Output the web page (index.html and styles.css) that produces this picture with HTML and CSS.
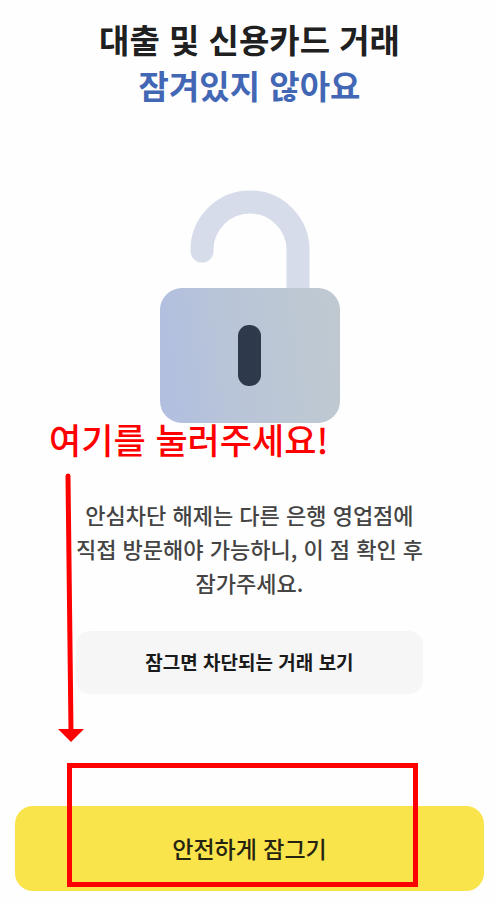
FILE: index.html
```html
<!DOCTYPE html>
<html lang="ko">
<head>
    <meta charset="UTF-8">
    <meta name="viewport" content="width=device-width, initial-scale=1.0">
    <title>대출 및 신용카드 거래</title>
    <link rel="stylesheet" href="styles.css">
</head>
<body>
    <main class="container">
        <h1 class="title">대출 및 신용카드 거래<br><span class="status">잠겨있지 않아요</span></h1>

        <svg class="lock" viewBox="0 0 180 234" aria-hidden="true">
            <defs>
                <linearGradient id="lock-body" x1="0" y1="0.1" x2="1" y2="0">
                    <stop offset="0" stop-color="#b2bfdf"/>
                    <stop offset="0.3" stop-color="#b8c4d8"/>
                    <stop offset="0.6" stop-color="#bbc7d5"/>
                    <stop offset="1" stop-color="#c0c9d0"/>
                </linearGradient>
            </defs>
            <path d="M42 61 V60 A48 48 0 0 1 138 60 V100" fill="none" stroke="#d6dce9" stroke-width="23" stroke-linecap="round"/>
            <rect x="0" y="98" width="180" height="135" rx="22" fill="url(#lock-body)"/>
            <rect x="78" y="135" width="23" height="61" rx="11" fill="#2e394c"/>
        </svg>

        <div class="guide">
            <p class="guide-text">여기를 눌러주세요!</p>
            <svg class="guide-arrow" viewBox="0 0 26 270" aria-hidden="true">
                <path d="M10 3 L13 258" stroke="#fe0000" stroke-width="5" stroke-linecap="round"/>
                <path d="M0 256 H26 L13 269 Z" fill="#fe0000"/>
            </svg>
        </div>

        <p class="description">안심차단 해제는 다른 은행 영업점에<br>직접 방문해야 가능하니, 이 점 확인 후<br>잠가주세요.</p>
        <button type="button" class="detail-button">잠그면 차단되는 거래 보기</button>

        <div class="bottom">
            <button type="button" class="lock-button">안전하게 잠그기</button>
            <div class="highlight"></div>
        </div>
    </main>
</body>
</html>
```
FILE: styles.css
```css
* {
    box-sizing: border-box;
}
body {
    margin: 0;
    background-color: #fefefe;
    font-family: "Noto Sans CJK KR", "Noto Sans", sans-serif;
    color: #202020;
}
.container {
    display: flex;
    flex-direction: column;
    align-items: center;
    padding: 16px 12px 10px 15px;
    text-align: center;
}
.title {
    margin: 0;
    font-size: 33px;
    line-height: 46px;
    font-weight: 700;
}
.status {
    color: #4267b5;
}
.lock {
    display: block;
    width: 180px;
    margin-top: 82px;
}
/* hand-drawn hint lying over the screen */
.guide {
    position: relative;
    align-self: stretch;
    height: 0;
}
.guide-text {
    position: absolute;
    top: -10px;
    left: 34px;
    margin: 0;
    font-size: 35px;
    line-height: 50px;
    font-weight: 500;
    color: #fe0000;
    white-space: nowrap;
}
.guide-arrow {
    position: absolute;
    top: 49px;
    left: 43px;
    width: 26px;
}
.description {
    margin: 73px 0 0;
    font-size: 22px;
    line-height: 34px;
    font-weight: 500;
    color: #444;
}
button {
    border: none;
    font-family: inherit;
    cursor: pointer;
}
.detail-button {
    width: 74%;
    margin-top: 32px;
    padding: 17px 10px 18px;
    border-radius: 14px;
    background-color: #f6f6f6;
    font-size: 19px;
    line-height: 28px;
    font-weight: 700;
    color: #1a1a1a;
}
.bottom {
    position: relative;
    align-self: stretch;
    margin-top: 112px;
}
.lock-button {
    display: block;
    width: 100%;
    padding: 25px 10px 26px;
    border-radius: 18px;
    background-color: #f9e44b;
    font-size: 23px;
    line-height: 34px;
    font-weight: 500;
    color: #262310;
}
.highlight {
    position: absolute;
    top: -43px;
    right: 66px;
    bottom: 4px;
    left: 52px;
    border: 5px solid #fe0000;
    pointer-events: none;
}
```
